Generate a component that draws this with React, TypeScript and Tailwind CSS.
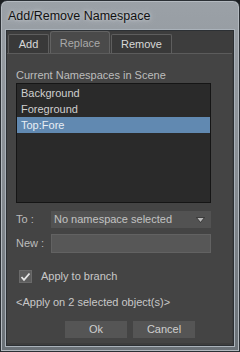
import React from "react";

export default function App() {
  const font = { fontFamily: '"Liberation Sans", Arial, sans-serif' };
  return (
    <div className="w-[240px] h-[352px] bg-[#1b1e21]" style={font}>
      <div className="w-full h-full flex flex-col rounded-t-[7px] border border-[#2b3035] bg-gradient-to-b from-[#9ba1a7] via-[#878d93] to-[#6a7177] shadow-[inset_0_0_0_1px_#b4bac0]">
        {/* title */}
        <div className="h-[29px] shrink-0 flex items-center pl-[7px] pt-[1px]">
          <span className="text-[12.5px] text-[#111] [text-shadow:0_0_6px_#c8ccd0,0_0_3px_#c8ccd0]">
            Add/Remove Namespace
          </span>
        </div>
        {/* content */}
        <div className="flex-1 mx-[5px] mb-[5px] border border-[#2c3034] shadow-[0_0_0_1px_#aab2ba] bg-[#3d3d3d] flex flex-col">
          {/* tabs */}
          <div className="h-[22px] shrink-0 flex items-end pl-[1px] gap-[1px]">
            <div className="w-[41px] h-[19px] border border-b-0 border-[#5e5e5e] rounded-t-[2px] bg-[#393939] flex items-center justify-center text-[11px] text-[#d8d8d8]">
              Add
            </div>
            <div className="w-[60px] h-[22px] border border-b-0 border-[#626262] rounded-t-[3px] bg-[#4a4a4a] flex items-center justify-center text-[11px] text-[#a9a9a9] pt-[1px]">
              Replace
            </div>
            <div className="w-[61px] h-[19px] border border-b-0 border-[#5e5e5e] rounded-t-[2px] bg-[#393939] flex items-center justify-center text-[11px] text-[#d8d8d8]">
              Remove
            </div>
          </div>
          {/* pane */}
          <div className="flex-1 bg-[#444444] border-t border-[#5c5c5c] mr-[1px] mb-[2px] flex flex-col pl-[9px] pt-[14px] text-[11px] text-[#c4c4c4]">
            <div className="h-[14px] leading-[14px] text-[#bdbdbd]">Current Namespaces in Scene</div>
            <div className="mt-[1px] w-[195px] h-[120px] border border-[#151515] bg-[#2a2a2a] flex flex-col pt-[1px] text-[#cfcfcf]">
              <div className="h-[16px] leading-[16px] pl-[4px]">Background</div>
              <div className="h-[16px] leading-[16px] pl-[4px]">Foreground</div>
              <div className="h-[16px] leading-[16px] pl-[4px] bg-[#6189b1] text-[#e8eef4]">Top:Fore</div>
            </div>
            <div className="mt-[8px] flex items-center h-[17px]">
              <div className="w-[35px] text-[#bdbdbd]">To :</div>
              <div className="w-[160px] h-[17px] bg-[#525252] flex items-center pl-[3px] pr-[6px] text-[#c2c2c2]">
                <span className="flex-1">No namespace selected</span>
                <svg width="9" height="6" viewBox="0 0 9 6">
                  <path d="M0.5 0.5 H8.5 L4.5 5.5 Z" fill="#b8b8b8" stroke="#2a2a2a" strokeWidth="0.8" />
                </svg>
              </div>
            </div>
            <div className="mt-[6px] flex items-center h-[19px]">
              <div className="w-[35px] text-[#bdbdbd]">New :</div>
              <div className="w-[160px] h-[19px] bg-[#575757] border border-[#626262]" />
            </div>
            <div className="mt-[17px] flex items-center h-[13px] pl-[3px]">
              <div className="w-[13px] h-[13px] bg-[#5d5d5d] border border-[#6a6a6a] flex items-center justify-center">
                <svg width="11" height="10" viewBox="0 0 11 10">
                  <path d="M1.5 5 L4 7.8 L9.5 1.5" fill="none" stroke="#e6e6e6" strokeWidth="1.8" />
                </svg>
              </div>
              <span className="ml-[9px] text-[#c8c8c8]">Apply to branch</span>
            </div>
            <div className="mt-[12px] h-[14px] leading-[14px] text-[#c8c8c8]">&lt;Apply on 2 selected object(s)&gt;</div>
            <div className="mt-[12px] flex gap-[6px] ml-[49px]">
              <div className="w-[62px] h-[17px] bg-[#555555] flex items-center justify-center text-[#cfcfcf]">Ok</div>
              <div className="w-[62px] h-[17px] bg-[#555555] flex items-center justify-center text-[#cfcfcf]">Cancel</div>
            </div>
          </div>
        </div>
      </div>
    </div>
  );
}
